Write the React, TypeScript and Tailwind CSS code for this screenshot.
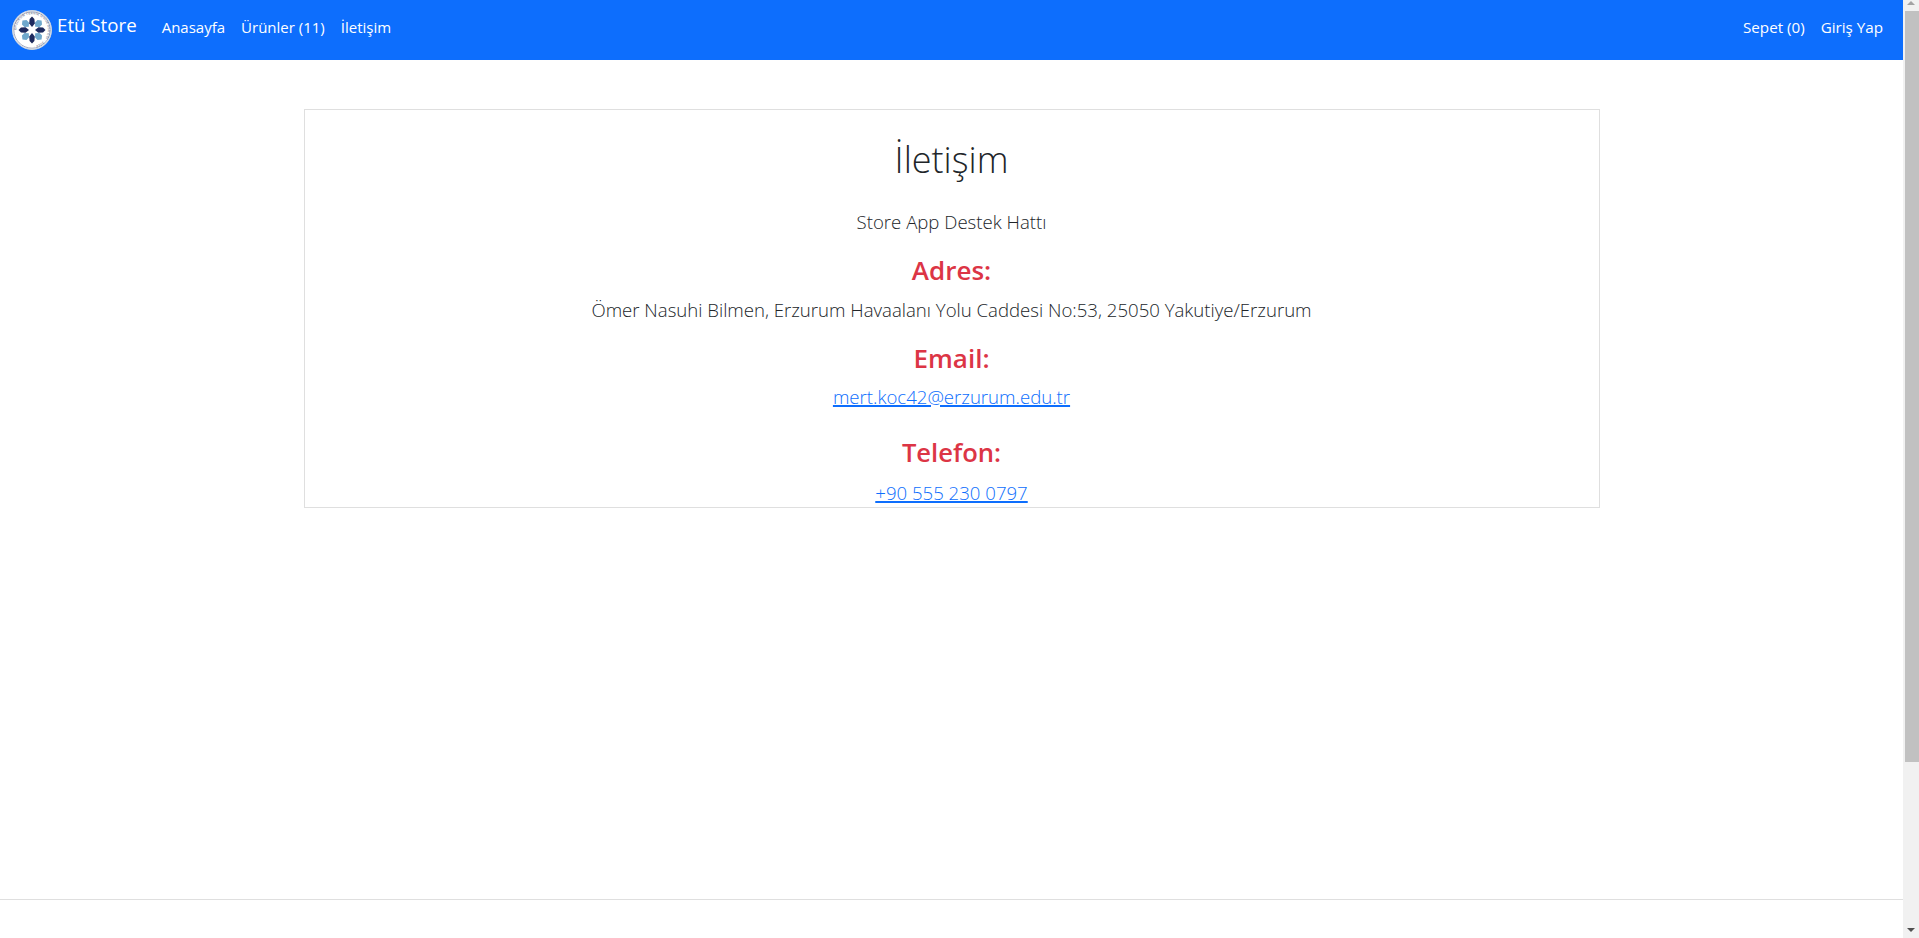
import React from 'react';

const arms = [0, 90, 180, 270];
const diagonals = [45, 135, 225, 315];

function Logo() {
  return (
    <svg width="40" height="40" viewBox="0 0 40 40" className="shrink-0">
      <defs>
        <path id="ring" d="M20 20 m-15.8 0 a15.8 15.8 0 1 1 31.6 0 a15.8 15.8 0 1 1 -31.6 0" />
      </defs>
      <circle cx="20" cy="20" r="19.5" fill="#fff" stroke="#c9d3e0" strokeWidth="1" />
      <circle cx="20" cy="20" r="18.2" fill="none" stroke="#1d2a5c" strokeWidth="0.4" />
      <text fontSize="3.2" fill="#4a5578" fontFamily="'Liberation Sans', sans-serif" letterSpacing="0.25">
        <textPath href="#ring">ERZURUM TEKNİK ÜNİVERSİTESİ · 2010 ·</textPath>
      </text>
      {diagonals.map((deg) => (
        <g key={deg} transform={`rotate(${deg} 20 20)`}>
          <path d="M20 15.5 L16.8 12.5 L16.8 9 L20 6.5 L23.2 9 L23.2 12.5 Z" fill="#6fa8cc" />
        </g>
      ))}
      {arms.map((deg) => (
        <g key={deg} transform={`rotate(${deg} 20 20)`}>
          <path d="M20 17 L17.2 13.6 L17.6 9 L20 6.5 L22.4 9 L22.8 13.6 Z" fill="#1e2a5e" />
        </g>
      ))}
      <circle cx="20" cy="20" r="2.4" fill="#fff" />
    </svg>
  );
}

function Scrollbar() {
  return (
    <div className="flex h-full w-4 shrink-0 flex-col bg-[#f1f1f1]">
      <div className="flex h-[11px] justify-center pt-[1px]">
        <div className="h-0 w-0 border-x-[4px] border-b-[4px] border-x-transparent border-b-[#a3a3a3]" />
      </div>
      <div className="ml-[2px] h-[751px] bg-[#c1c1c1]" />
      <div className="flex-1" />
      <div className="flex h-[17px] items-center justify-center">
        <div className="h-0 w-0 border-x-[4px] border-t-[4px] border-x-transparent border-t-[#505050]" />
      </div>
    </div>
  );
}

export default function App() {
  return (
    <div className="flex h-[938px] w-full overflow-hidden bg-white font-['Open_Sans',sans-serif] text-[#212529]">
      <div className="flex min-w-0 flex-1 flex-col">
        <nav className="flex h-[60px] shrink-0 items-center bg-[#0d6efd] pl-3 pr-5 text-white">
          <a className="flex items-center gap-[5px]">
            <Logo />
            <span className="mb-[10px] text-[18.7px]">Etü Store</span>
          </a>
          <div className="mb-[6px] ml-[25px] flex gap-4 text-[15px]">
            <a>Anasayfa</a>
            <a>Ürünler (11)</a>
            <a>İletişim</a>
          </div>
          <div className="mb-[6px] ml-auto flex gap-4 text-[15.2px]">
            <a>Sepet (0)</a>
            <a>Giriş Yap</a>
          </div>
        </nav>
        <main className="flex-1">
          <div className="mx-auto mt-[49px] flex h-[399px] w-[1296px] flex-col items-center border border-[#dfdfdf] pt-[26px] text-center">
            <h1 className="text-[36px] leading-[48px] font-light">İletişim</h1>
            <p className="mt-[23px] text-[18.6px] leading-[30px] font-light">Store App Destek Hattı</p>
            <h3 className="mt-4 text-[26px] leading-[34px] font-semibold text-[#dc3545]">Adres:</h3>
            <p className="mt-2 text-[18.6px] leading-[30px] font-light">
              Ömer Nasuhi Bilmen, Erzurum Havaalanı Yolu Caddesi No:53, 25050 Yakutiye/Erzurum
            </p>
            <h3 className="mt-4 text-[26px] leading-[34px] font-semibold text-[#dc3545]">Email:</h3>
            <a className="mt-[7px] text-[18.6px] leading-[30px] font-light text-[#0d6efd] underline decoration-2">mert.koc42@erzurum.edu.tr</a>
            <h3 className="mt-[24px] text-[25.6px] leading-[34px] font-semibold text-[#dc3545]">Telefon:</h3>
            <a className="mt-2 text-[18.6px] leading-[30px] font-light text-[#0d6efd] underline decoration-2">+90 555 230 0797</a>
          </div>
        </main>
        <footer className="h-[39px] shrink-0 border-t border-[#dfdfdf]" />
      </div>
      <Scrollbar />
    </div>
  );
}
